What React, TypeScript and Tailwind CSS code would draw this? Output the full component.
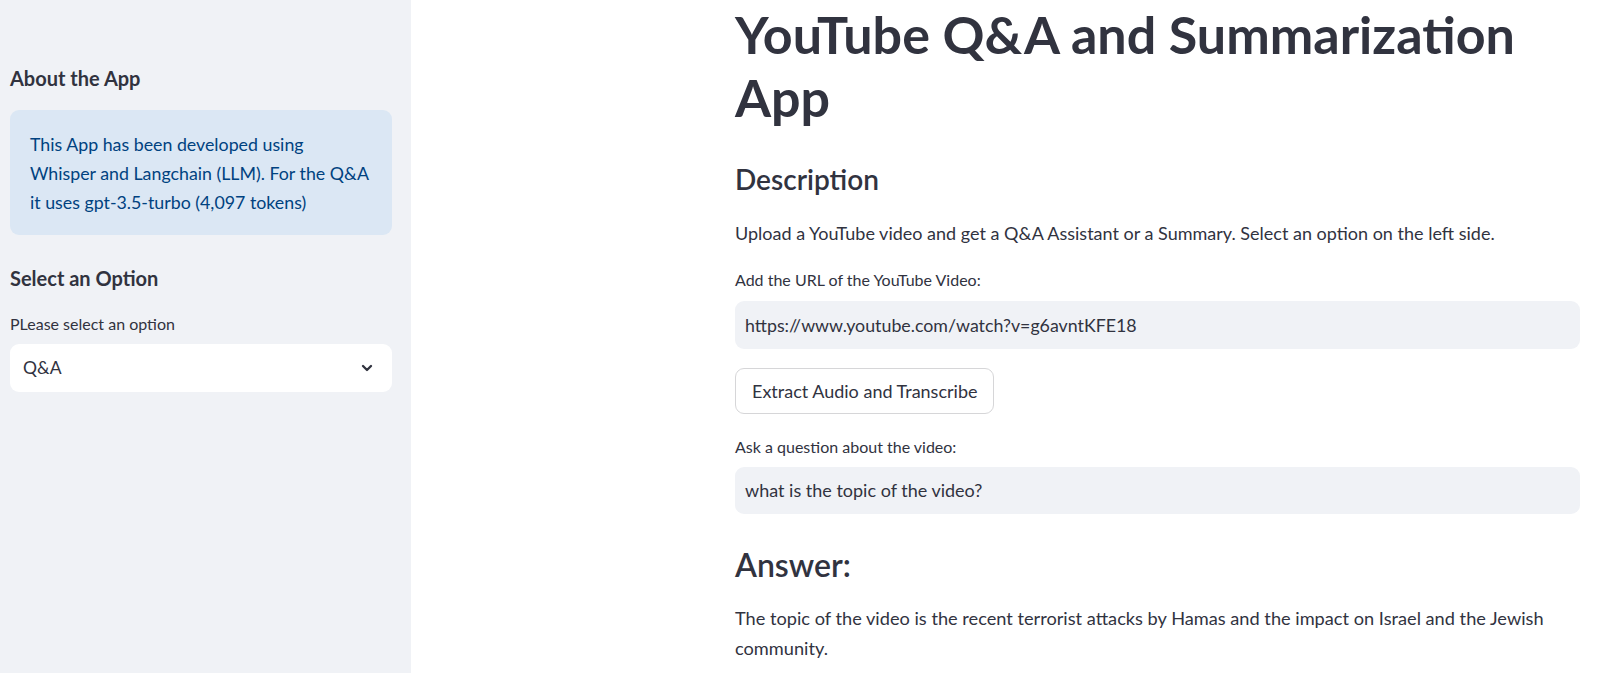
import React from "react";

function Chevron() {
  return (
    <svg width="16" height="16" viewBox="0 0 24 24" fill="none" stroke="#31333f" strokeWidth="3.5" strokeLinecap="round" strokeLinejoin="round">
      <path d="M6 9l6 6 6-6" />
    </svg>
  );
}

export default function App() {
  return (
    <div className="flex h-[673px] overflow-hidden font-['Lato',sans-serif] text-[#31333f]">
      <aside className="w-[411px] shrink-0 bg-[#f0f2f6] pl-[10px] pr-[19px]">
        <h3 className="mt-[66px] text-[20px] font-bold leading-[24px]">About the App</h3>
        <div className="mt-[20px] whitespace-nowrap rounded-[9px] bg-[#dbe7f4] px-[20px] pt-[20px] pb-[18px] text-[17.8px] leading-[29px] text-[#004280]">
          This App has been developed using
          <br />
          Whisper and Langchain (LLM). For the Q&amp;A
          <br />
          it uses gpt-3.5-turbo (4,097 tokens)
        </div>
        <h3 className="mt-[31px] text-[20px] font-bold leading-[24px]">Select an Option</h3>
        <label className="mt-[24px] block text-[16px] leading-[20px]">PLease select an option</label>
        <div className="mt-[10px] flex h-[48px] items-center justify-between rounded-[9px] bg-white pl-[13px] pr-[17px] text-[17.5px]">
          <span>Q&amp;A</span>
          <Chevron />
        </div>
      </aside>
      <main className="flex-1 pl-[324px]">
        <div className="flex w-[845px] flex-col">
          <h1 className="pt-[3px] text-[52px] font-bold leading-[63px]">
            YouTube Q&amp;A and Summarization
            <br />
            App
          </h1>
          <h3 className="mt-[30px] text-[28px] font-semibold leading-[40px]">Description</h3>
          <p className="mt-[19px] text-[18px] leading-[30px]">
            Upload a YouTube video and get a Q&amp;A Assistant or a Summary. Select an option on the left side.
          </p>
          <label className="mt-[22px] block text-[16px] leading-[20px]">Add the URL of the YouTube Video:</label>
          <div className="mt-[11px] flex h-[48px] items-center rounded-[9px] bg-[#f0f2f6] px-[10px] text-[17.8px]">
            https://www.youtube.com/watch?v=g6avntKFE18
          </div>
          <div className="mt-[19px]">
            <button className="h-[46px] rounded-[9px] border border-[#d6d6d8] bg-white px-[16px] text-[18px]">
              Extract Audio and Transcribe
            </button>
          </div>
          <label className="mt-[23px] block text-[16px] leading-[20px]">Ask a question about the video:</label>
          <div className="mt-[10px] flex h-[47px] items-center rounded-[9px] bg-[#f0f2f6] px-[10px] text-[18px]">
            what is the topic of the video?
          </div>
          <h2 className="mt-[29px] text-[32px] font-semibold leading-[44px]">Answer:</h2>
          <p className="mt-[17px] text-[18.2px] leading-[29.5px]">
            The topic of the video is the recent terrorist attacks by Hamas and the impact on Israel and the Jewish
            <br />
            community.
          </p>
        </div>
      </main>
    </div>
  );
}
